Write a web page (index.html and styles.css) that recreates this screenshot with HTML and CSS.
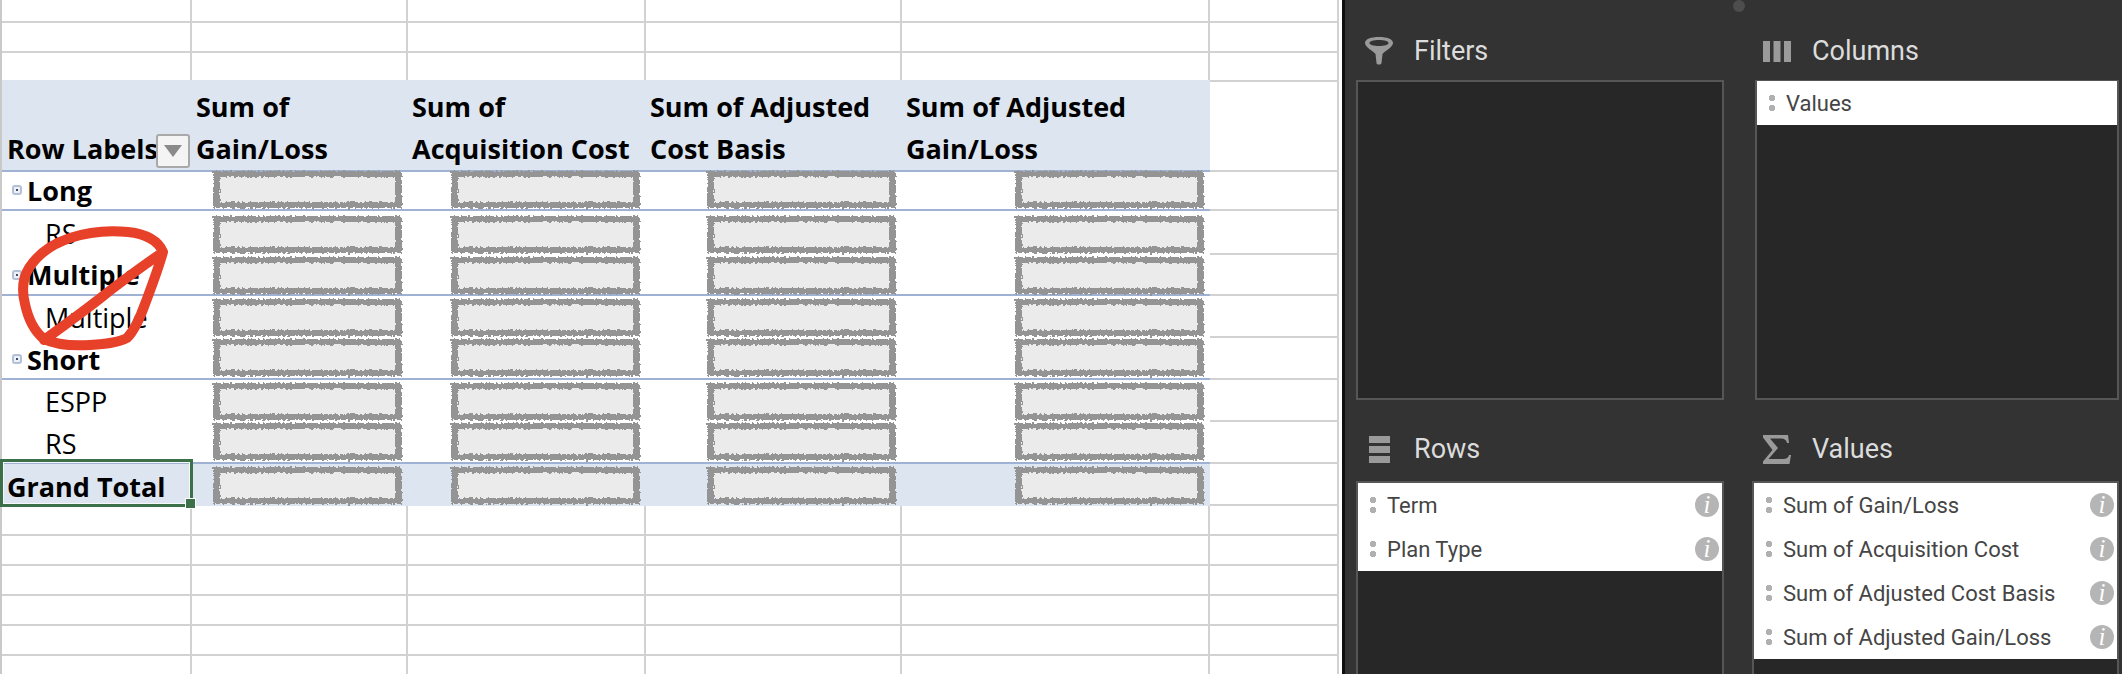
FILE: index.html
```html
<!DOCTYPE html>
<html lang="en">
<head>
<meta charset="utf-8">
<title>PivotTable Fields</title>
<link rel="stylesheet" href="styles.css">
</head>
<body>
<svg class="defs" aria-hidden="true"><defs>
  <filter id="rough" x="-5%" y="-15%" width="110%" height="130%">
    <feTurbulence type="fractalNoise" baseFrequency="0.4" numOctaves="2" seed="4" result="n"/>
    <feDisplacementMap in="SourceGraphic" in2="n" scale="5" xChannelSelector="R" yChannelSelector="G"/>
    <feGaussianBlur stdDeviation="0.35"/>
  </filter>
</defs></svg>
<div class="app">
  <main class="sheet">
    <div class="row h-top"><i class="cell"></i><i class="cell"></i><i class="cell"></i><i class="cell"></i><i class="cell"></i><i class="cell"></i></div>
    <div class="row h-30"><i class="cell"></i><i class="cell"></i><i class="cell"></i><i class="cell"></i><i class="cell"></i><i class="cell"></i></div>
    <div class="row h-28 open"><i class="cell"></i><i class="cell"></i><i class="cell"></i><i class="cell"></i><i class="cell"></i><i class="cell"></i></div>

    <div class="row head">
      <div class="hd hd-first"><span>Row Labels</span><span class="dd"><i></i></span></div>
      <div class="hd">Sum of<br>Gain/Loss</div>
      <div class="hd">Sum of<br>Acquisition Cost</div>
      <div class="hd">Sum of Adjusted<br>Cost Basis</div>
      <div class="hd">Sum of Adjusted<br>Gain/Loss</div>
      <i class="cell top"></i>
    </div>

    <div class="row data line o2">
      <div class="lab bold"><i class="exp"></i>Long</div>
      <div class="val"><b class="redact"></b></div><div class="val"><b class="redact"></b></div><div class="val"><b class="redact"></b></div><div class="val"><b class="redact"></b></div>
      <i class="cell"></i>
    </div>
    <div class="row data o5">
      <div class="lab sub">RS</div>
      <div class="val"><b class="redact"></b></div><div class="val"><b class="redact"></b></div><div class="val"><b class="redact"></b></div><div class="val"><b class="redact"></b></div>
      <i class="cell"></i>
    </div>
    <div class="row data tall line o4">
      <div class="lab bold"><i class="exp"></i>Multiple</div>
      <div class="val"><b class="redact"></b></div><div class="val"><b class="redact"></b></div><div class="val"><b class="redact"></b></div><div class="val"><b class="redact"></b></div>
      <i class="cell"></i>
    </div>
    <div class="row data o3">
      <div class="lab sub">Multiple</div>
      <div class="val"><b class="redact"></b></div><div class="val"><b class="redact"></b></div><div class="val"><b class="redact"></b></div><div class="val"><b class="redact"></b></div>
      <i class="cell"></i>
    </div>
    <div class="row data line o1">
      <div class="lab bold"><i class="exp"></i>Short</div>
      <div class="val"><b class="redact"></b></div><div class="val"><b class="redact"></b></div><div class="val"><b class="redact"></b></div><div class="val"><b class="redact"></b></div>
      <i class="cell"></i>
    </div>
    <div class="row data o3">
      <div class="lab sub">ESPP</div>
      <div class="val"><b class="redact"></b></div><div class="val"><b class="redact"></b></div><div class="val"><b class="redact"></b></div><div class="val"><b class="redact"></b></div>
      <i class="cell"></i>
    </div>
    <div class="row data line o1">
      <div class="lab sub">RS</div>
      <div class="val"><b class="redact"></b></div><div class="val"><b class="redact"></b></div><div class="val"><b class="redact"></b></div><div class="val"><b class="redact"></b></div>
      <i class="cell"></i>
    </div>
    <div class="row data total o3">
      <div class="lab bold total-lab">Grand Total<span class="sel"><span class="grip"></span></span></div>
      <div class="val"><b class="redact"></b></div><div class="val"><b class="redact"></b></div><div class="val"><b class="redact"></b></div><div class="val"><b class="redact"></b></div>
      <i class="cell"></i>
    </div>

    <div class="row h-30"><i class="cell"></i><i class="cell"></i><i class="cell"></i><i class="cell"></i><i class="cell"></i><i class="cell"></i></div>
    <div class="row h-30"><i class="cell"></i><i class="cell"></i><i class="cell"></i><i class="cell"></i><i class="cell"></i><i class="cell"></i></div>
    <div class="row h-30"><i class="cell"></i><i class="cell"></i><i class="cell"></i><i class="cell"></i><i class="cell"></i><i class="cell"></i></div>
    <div class="row h-30"><i class="cell"></i><i class="cell"></i><i class="cell"></i><i class="cell"></i><i class="cell"></i><i class="cell"></i></div>
    <div class="row h-30"><i class="cell"></i><i class="cell"></i><i class="cell"></i><i class="cell"></i><i class="cell"></i><i class="cell"></i></div>
    <div class="row h-30"><i class="cell"></i><i class="cell"></i><i class="cell"></i><i class="cell"></i><i class="cell"></i><i class="cell"></i></div>

    <svg class="scribble" viewBox="0 210 200 150" aria-hidden="true">
      <path d="M163 252C158 240 146 234 128 232C108 230 88 232 70 238C52 244 38 254 29 268C22 279 22 292 25 304C28 318 34 331 44 339C56 345 72 346 90 345C104 344 118 343 127 338C134 331 140 318 145 304C151 288 158 270 163 252C140 268 118 284 98 300C80 314 62 327 44 340" />
    </svg>
  </main>

  <aside class="panel">
    <span class="notch"></span>
    <section class="area">
      <h2 class="title">
        <span class="ico"><svg width="30" height="28" viewBox="0 0 30 28"><path class="fill" fill-rule="evenodd" d="M15 0C23 0 29 2 29 6C29 10 21 14 18.500 17L17.500 26C17.500 28 12.500 28 12.500 26L11.500 17C9 14 1 10 1 6C1 2 7 0 15 0ZM15 3C9.500 3 5.500 4.200 5.500 6C5.500 7.800 9.500 9 15 9C20.500 9 24.500 7.800 24.500 6C24.500 4.200 20.500 3 15 3Z"/></svg></span>
        Filters
      </h2>
      <div class="box"></div>
    </section>
    <section class="area">
      <h2 class="title right">
        <span class="ico"><svg width="28" height="21" viewBox="0 0 28 21"><path class="fill" d="M0 0H7V21H0ZM10.500 0H17.500V21H10.500ZM21 0H28V21H21Z"/></svg></span>
        Columns
      </h2>
      <div class="box inset">
        <div class="item"><span class="drag"></span>Values</div>
      </div>
    </section>
    <section class="area low">
      <h2 class="title">
        <span class="ico"><svg width="21" height="27" viewBox="0 0 21 27"><path class="fill" d="M0 0H21V7H0ZM0 10H21V17H0ZM0 20H21V27H0Z"/></svg></span>
        Rows
      </h2>
      <div class="box">
        <div class="item"><span class="drag"></span>Term<span class="info">i</span></div>
        <div class="item"><span class="drag"></span>Plan Type<span class="info">i</span></div>
      </div>
    </section>
    <section class="area low">
      <h2 class="title right">
        <span class="ico"><svg width="28" height="29" viewBox="0 0 28 29"><path class="fill" d="M0 0H25L26 8H24C23.500 5 21.500 3.500 18 3.500H7L15 13L5.500 24H20C23.500 24 25.500 22.500 26 20H28L26.500 29H0V26.500L9.500 15L0 2.500Z"/></svg></span>
        Values
      </h2>
      <div class="box">
        <div class="item"><span class="drag"></span>Sum of Gain/Loss<span class="info">i</span></div>
        <div class="item"><span class="drag"></span>Sum of Acquisition Cost<span class="info">i</span></div>
        <div class="item"><span class="drag"></span>Sum of Adjusted Cost Basis<span class="info">i</span></div>
        <div class="item"><span class="drag"></span>Sum of Adjusted Gain/Loss<span class="info">i</span></div>
      </div>
    </section>
  </aside>
</div>
</body>
</html>
```
FILE: styles.css
```css
* { box-sizing: border-box; }
html, body { margin: 0; height: 100%; overflow: hidden; background: #fff; }
.defs { position: absolute; width: 0; height: 0; }

.app { display: flex; height: 674px; width: 2122px; }

/* ---------- spreadsheet ---------- */
.sheet {
  position: relative;
  flex: 0 0 1342px;
  border-left: 2px solid #c9c9c9;
  font-family: "Open Sans", "Liberation Sans", sans-serif;
  color: #000;
  background: #fff;
}
.row {
  display: grid;
  grid-template-columns: 190px 216px 238px 256px 308px 129px;
  height: 30px;
}
.h-top { height: 23px; }
.h-30 { height: 30px; }
.h-28 { height: 27px; }
.cell {
  display: block;
  border-right: 2px solid #d2d2d2;
  border-bottom: 2px solid #d2d2d2;
}
.open .cell { border-bottom: 0; }
.cell.top { border-top: 2px solid #d2d2d2; }

.head { height: 89px; }
.hd {
  background: #dde5f0;
  border-bottom: 2px solid #9fb2d3;
  font-size: 27px;
  font-weight: 700;
  line-height: 42px;
  padding: 6px 0 0 4px;
  white-space: nowrap;
}
.hd-first {
  display: flex;
  align-items: flex-end;
  justify-content: space-between;
  padding: 0 0 0 5px;
}
.dd {
  flex: none;
  display: flex;
  align-items: center;
  justify-content: center;
  width: 34px;
  height: 34px;
  margin: 0 2px 2px -8px;
  background: #f4f4f4;
  border: 2px solid #a9a9a9;
  border-radius: 3px;
}
.dd i {
  width: 0;
  height: 0;
  border-left: 9px solid transparent;
  border-right: 9px solid transparent;
  border-top: 12px solid #8a8a8a;
}

.data { height: 42px; }
.tall { height: 43px; }
.data .lab, .data .val { border-bottom: 2px solid transparent; }
.line .lab, .line .val { border-bottom-color: #9fb2d3; }
.lab {
  display: flex;
  align-items: center;
  padding-top: 2px;
  font-size: 27px;
  line-height: 1;
  white-space: nowrap;
}
.bold { font-weight: 700; padding-left: 10px; }
.sub { padding-left: 43px; }
.exp {
  flex: none;
  display: flex;
  align-items: center;
  justify-content: center;
  width: 10px;
  height: 10px;
  margin-right: 5px;
  background: #eef1f7;
  border: 2px solid #b4c0d8;
  border-radius: 3px;
}
.exp::after {
  content: "";
  width: 2px;
  height: 2px;
  background: #3f4b66;
}
.val {
  display: flex;
  justify-content: flex-end;
  align-items: flex-start;
  padding-right: 6px;
}
.redact {
  display: block;
  width: 189px;
  height: 37px;
  background: #ebebeb;
  border: solid #949494;
  border-width: 6px 7px;
  filter: url(#rough);
}
.o1 .val { padding-top: 1px; }
.o2 .val { padding-top: 2px; }
.o3 .val { padding-top: 3px; }
.o4 .val { padding-top: 4px; }
.o5 .val { padding-top: 5px; }

.total .lab, .total .val { background: #dde5f0; border-bottom: 0; }
.total-lab { position: relative; padding-left: 5px; }
.sel {
  position: absolute;
  left: -2px;
  top: -5px;
  width: 193px;
  height: 48px;
  border: 3px solid #3b7048;
  box-shadow: inset 0 0 0 1px #f5f7fa;
}
.grip {
  position: absolute;
  right: -6px;
  bottom: -5px;
  width: 11px;
  height: 11px;
  background: #3b7048;
  border: 1px solid #fff;
}

.scribble {
  position: absolute;
  left: -2px;
  top: 210px;
  width: 200px;
  height: 150px;
  pointer-events: none;
}
.scribble path {
  fill: none;
  stroke: #e8412a;
  stroke-width: 10;
  stroke-linecap: round;
  stroke-linejoin: round;
}

/* ---------- field panel ---------- */
.panel {
  position: relative;
  flex: 1;
  display: grid;
  grid-template-columns: 368px 367px;
  grid-template-rows: 400px 274px;
  column-gap: 28px;
  padding-left: 11px;
  background: #333333;
  border-left: 3px solid #0f0f0f;
  font-family: Roboto, "Liberation Sans", Arial, sans-serif;
  overflow: hidden;
}
.notch {
  position: absolute;
  left: 388px;
  top: 0;
  width: 12px;
  height: 12px;
  border-radius: 50%;
  background: #4d4d4d;
}
.area { display: flex; flex-direction: column; min-height: 0; }
.title {
  flex: none;
  display: flex;
  align-items: center;
  gap: 20px;
  height: 80px;
  margin: 0;
  padding: 22px 0 0 8px;
  color: #dcdcdc;
  font-size: 27px;
  font-weight: 400;
}
.low .title { height: 81px; padding-top: 17px; }
.title.right { padding-left: 10px; }
.ico { flex: none; display: flex; justify-content: center; width: 30px; }
.fill { fill: #9a9a9a; }
.box {
  flex: 1;
  min-height: 0;
  background: #282728;
  border: 2px solid #565656;
}
.low .box { border-bottom: 0; }
.inset { margin-left: 3px; border-top-width: 1px; }
.item {
  display: flex;
  align-items: center;
  height: 44px;
  padding-left: 12px;
  background: #fff;
  color: #454545;
  font-size: 22px;
  white-space: nowrap;
}
.drag {
  flex: none;
  width: 6px;
  height: 16px;
  margin-right: 11px;
  background:
    radial-gradient(circle at 3px 3px, #b0b0b0 3px, transparent 3.500px),
    radial-gradient(circle at 3px 13px, #b0b0b0 3px, transparent 3.500px);
}
.info {
  display: flex;
  align-items: center;
  justify-content: center;
  width: 24px;
  height: 24px;
  margin-left: auto;
  margin-right: 3px;
  border-radius: 50%;
  background: #b5b5b5;
  color: #fff;
  font: italic 400 25px "Liberation Serif", serif;
}
```
